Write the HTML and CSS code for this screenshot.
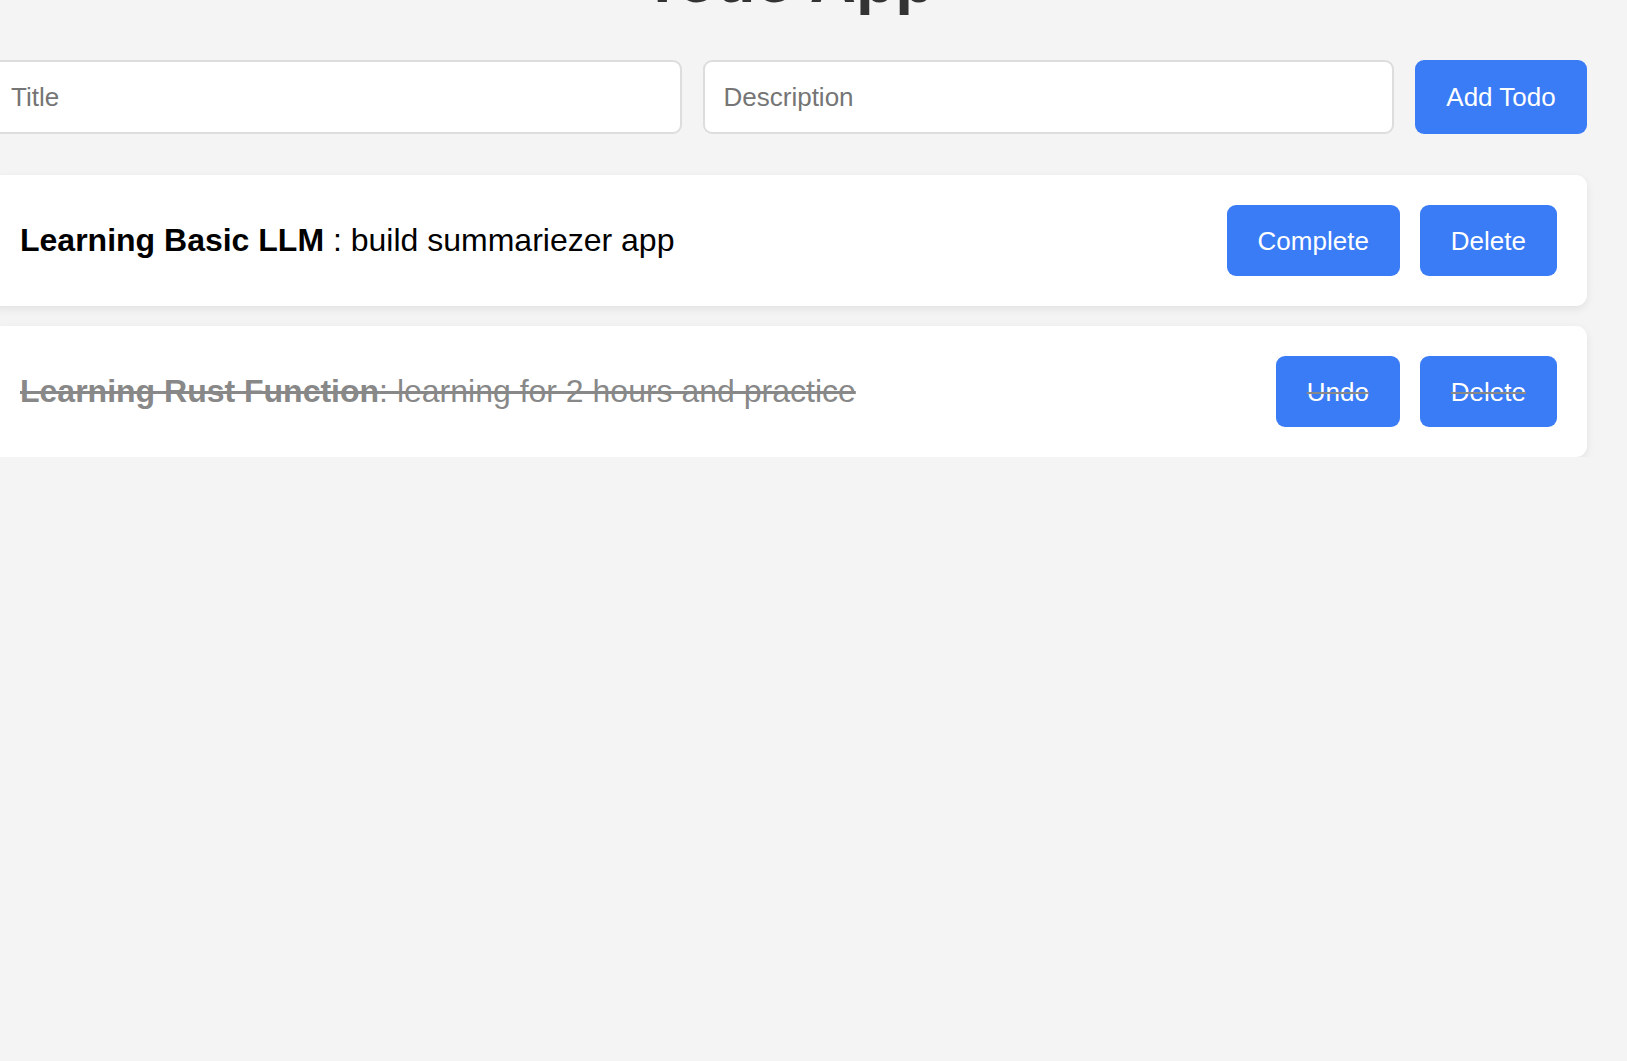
FILE: index.html
```html
<!DOCTYPE html>
<html lang="en">
<head>
<meta charset="utf-8">
<title>Todo App</title>
<link rel="stylesheet" href="styles.css">
</head>
<body>
<div class="app">
  <h1 class="app-title">Todo App</h1>
  <form class="todo-form">
    <input class="todo-input" type="text" placeholder="Title">
    <input class="todo-input" type="text" placeholder="Description">
    <button class="btn btn-add" type="button">Add Todo</button>
  </form>
  <ul class="todo-list">
    <li class="todo-item">
      <span class="todo-text"><strong>Learning Basic LLM </strong>: build summariezer app</span>
      <div class="todo-actions">
        <button class="btn" type="button">Complete</button>
        <button class="btn" type="button">Delete</button>
      </div>
    </li>
    <li class="todo-item done">
      <span class="todo-text"><strong>Learning Rust Function</strong>: learning for 2 hours and practice</span>
      <div class="todo-actions">
        <button class="btn" type="button">Undo</button>
        <button class="btn" type="button">Delete</button>
      </div>
    </li>
  </ul>
</div>
</body>
</html>
```
FILE: styles.css
```css
html, body {
  margin: 0;
  padding: 0;
}

body {
  background: #f4f4f4;
  font-family: "Liberation Sans", Arial, Helvetica, sans-serif;
  overflow: hidden;
}

.app {
  width: 1597px;
  margin-left: -10px;
  margin-top: -57px;
}

.app-title {
  margin: 0 0 43px;
  text-align: center;
  font-size: 64px;
  line-height: normal;
  font-weight: bold;
  color: #333;
}

.todo-form {
  display: flex;
  gap: 21px;
  height: 74px;
  margin: 0 0 41px;
}

.todo-input {
  flex: 1;
  min-width: 0;
  box-sizing: border-box;
  height: 74px;
  padding: 0 19px;
  border: 2px solid #ddd;
  border-radius: 9px;
  background: #fff;
  font-family: inherit;
  font-size: 26px;
  color: #333;
  outline: none;
}

.todo-input::placeholder {
  color: #757575;
}

.btn {
  background: #3a7bf6;
  color: #fff;
  border: none;
  border-radius: 9px;
  font-family: inherit;
  font-size: 26px;
  line-height: 30px;
  padding: 20.5px 31px;
  cursor: pointer;
}

.btn-add {
  width: 172px;
  height: 74px;
  padding: 0;
}

.todo-list {
  list-style: none;
  margin: 0;
  padding: 0;
  display: flex;
  flex-direction: column;
  gap: 20px;
}

.todo-item {
  display: flex;
  align-items: center;
  justify-content: space-between;
  background: #fff;
  padding: 30px;
  border-radius: 11px;
  box-shadow: 0 3px 8px rgba(0, 0, 0, 0.08);
}

.todo-text {
  font-size: 32px;
  color: #000;
}

.todo-actions {
  display: flex;
  gap: 20px;
}

.done .todo-text {
  color: #888;
  text-decoration: line-through;
}

.done .btn {
  text-decoration: line-through;
  text-decoration-color: #888;
}
```
